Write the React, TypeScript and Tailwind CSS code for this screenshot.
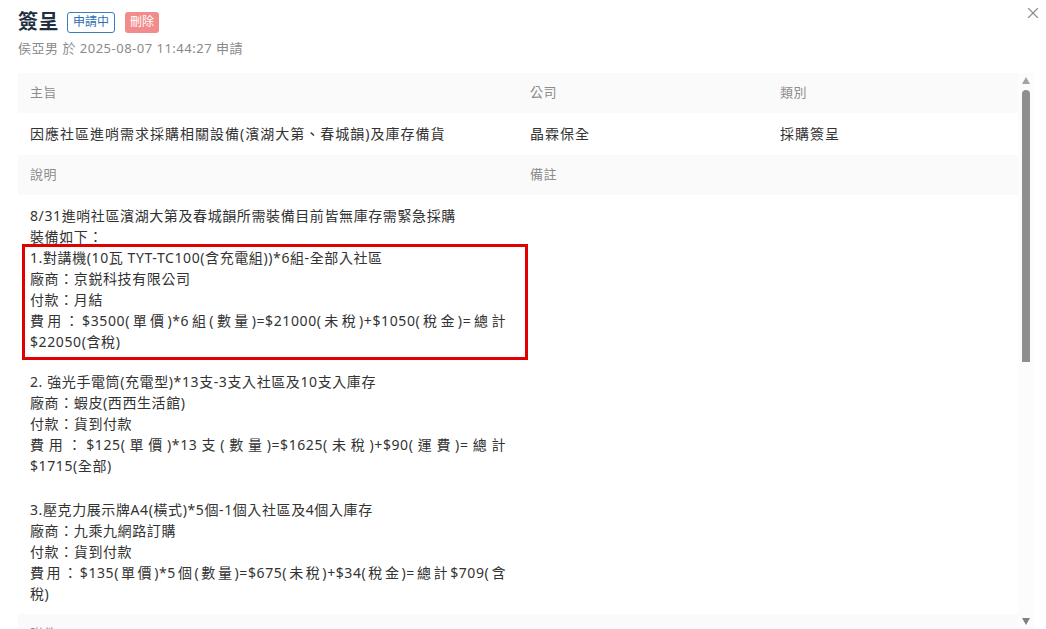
import { X } from 'lucide-react';

const FONT = { fontFamily: '"Noto Sans", "Noto Sans CJK TC", sans-serif' };

// j: justified line (wrapped in the original)
type Line = { t: string; j?: boolean };

const intro: Line[] = [
  { t: '8/31進哨社區濱湖大第及春城韻所需裝備目前皆無庫存需緊急採購' },
  { t: '裝備如下：' },
];

const item1: Line[] = [
  { t: '1.對講機(10瓦 TYT-TC100(含充電組))*6組-全部入社區' },
  { t: '廠商：京鋭科技有限公司' },
  { t: '付款：月結' },
  { t: '費用：$3500(單價)*6組(數量)=$21000(未稅)+$1050(稅金)=總計', j: true },
  { t: '$22050(含稅)' },
];

const item2: Line[] = [
  { t: '2. 強光手電筒(充電型)*13支-3支入社區及10支入庫存' },
  { t: '廠商：蝦皮(西西生活館)' },
  { t: '付款：貨到付款' },
  { t: '費用：$125(單價)*13支(數量)=$1625(未稅)+$90(運費)=總計', j: true },
  { t: '$1715(全部)' },
];

const item3: Line[] = [
  { t: '3.壓克力展示牌A4(橫式)*5個-1個入社區及4個入庫存' },
  { t: '廠商：九乘九網路訂購' },
  { t: '付款：貨到付款' },
  { t: '費用：$135(單價)*5個(數量)=$675(未稅)+$34(稅金)=總計$709(含', j: true },
  { t: '稅)' },
];

const Lines = ({ lines }: { lines: Line[] }) => (
  <>
    {lines.map((l, i) => (
      <div
        key={i}
        className={`h-[21px] whitespace-nowrap ${l.j ? 'text-justify [text-align-last:justify] whitespace-normal' : ''}`}
      >
        {l.t}
      </div>
    ))}
  </>
);

const HeadCell = ({ children, span }: { children?: React.ReactNode; span?: string }) => (
  <div className={`${span ?? ''} h-10 px-3 flex items-center bg-[#fafafa] text-[13px] text-[#8c8c8c] tracking-[0.5px]`}>
    {children}
  </div>
);

const ValueCell = ({ children }: { children?: React.ReactNode }) => (
  <div className="h-[42px] px-3 flex items-center text-[14px] tracking-[1px] text-[#333]">{children}</div>
);

const Scrollbar = () => (
  <div className="w-[16px] h-full bg-[#fcfcfc] flex flex-col items-center">
    <div className="mt-[4px] w-0 h-0 border-l-[4px] border-r-[4px] border-b-[7px] border-l-transparent border-r-transparent border-b-[#a3a3a3]" />
    <div className="mt-[6px] w-[8px] h-[272px] rounded-t-full rounded-b-[3px] bg-[#8f8f8f]" />
    <div className="flex-1" />
    <div className="mb-[4px] w-0 h-0 border-l-[4px] border-r-[4px] border-t-[7px] border-l-transparent border-r-transparent border-t-[#808080]" />
  </div>
);

const App = () => {
  return (
    <div className="w-[1046px] h-[629px] bg-white overflow-hidden relative text-[#333]" style={FONT}>
      <button className="absolute right-[4px] top-[4px] text-[#8c8c8c]">
        <X size={18} strokeWidth={1.5} />
      </button>
      <div className="pl-[18px] pt-[11px]">
        <div className="flex items-center gap-2 h-[22px]">
          <h1 className="text-[20px] font-bold text-[#1f2f3f] leading-none tracking-wide">{'簽呈'}</h1>
          <span className="h-[21px] px-[5px] flex items-center border border-[#3a7ec0] rounded-[3px] text-[12px] text-[#2f6fb4]">
            {'申請中'}
          </span>
          <span className="ml-[2px] h-[21px] px-[5px] flex items-center bg-[#f28b8b] rounded-[3px] text-[12px] text-white">
            {'刪除'}
          </span>
        </div>
        <p className="mt-[6px] text-[13px] text-[#8a8a8a] tracking-[0.5px]">{'侯亞男 於 2025-08-07 11:44:27 申請'}</p>
      </div>

      <div className="mt-[14px] ml-[18px] w-[1016px] h-[556px] flex">
        <div className="w-[1000px] h-full overflow-hidden">
          <div className="grid grid-cols-[500px_250px_250px]">
            <HeadCell>{'主旨'}</HeadCell>
            <HeadCell>{'公司'}</HeadCell>
            <HeadCell>{'類別'}</HeadCell>
            <ValueCell>{'因應社區進哨需求採購相關設備(濱湖大第、春城韻)及庫存備貨'}</ValueCell>
            <ValueCell>{'晶霖保全'}</ValueCell>
            <ValueCell>{'採購簽呈'}</ValueCell>
            <HeadCell>{'說明'}</HeadCell>
            <HeadCell span="col-span-2">{'備註'}</HeadCell>
            <div className="px-3 pt-[10px] pb-[10px] text-[14px] leading-[21px] tracking-[0.6px] text-[#333]">
              <Lines lines={intro} />
              <div className="relative">
                <div className="absolute -left-[8px] -top-[3px] w-[506px] -bottom-[8px] border-[3px] border-[#e00000]" />
                <Lines lines={item1} />
              </div>
              <div className="h-[19px]" />
              <Lines lines={item2} />
              <div className="h-[23px]" />
              <Lines lines={item3} />
            </div>
            <div className="col-span-2" />
            <HeadCell span="col-span-3">{'附件'}</HeadCell>
            <div className="col-span-3 h-[42px] px-3 flex items-center text-[14px] text-[#999]">{'無'}</div>
            <HeadCell span="col-span-3">{'簽核流程'}</HeadCell>
            <div className="col-span-3 px-3 py-3 text-[14px] leading-[24px]">
              <div>{'1. 侯亞男 申請 2025-08-07 11:44:27'}</div>
              <div>{'2. 主管審核 待簽核'}</div>
              <div>{'3. 財務審核 待簽核'}</div>
              <div>{'4. 總經理 待簽核'}</div>
            </div>
          </div>
        </div>
        <Scrollbar />
      </div>
    </div>
  );
};

export default App;
